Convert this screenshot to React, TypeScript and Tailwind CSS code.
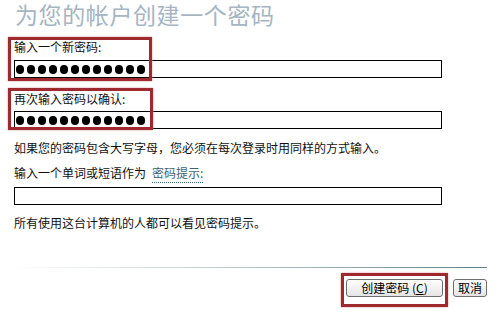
import React from "react";

const Dots = ({ count }: { count: number }) => {
  return (
    <div className="flex h-full items-center gap-[3px] pl-[1px]">
      {Array.from({ length: count }).map((_, i) => (
        <span key={i} className="block h-[9px] w-[8px] rounded-full bg-black" />
      ))}
    </div>
  );
};

const Field = ({ dots }: { dots?: number }) => {
  return (
    <div className="h-[18px] w-[428px] border border-black bg-white">
      {dots ? <Dots count={dots} /> : null}
    </div>
  );
};

const Highlight = ({ className }: { className: string }) => {
  return (
    <div
      className={`pointer-events-none absolute border-[3px] border-[#9e2a30] shadow-[0_0_2px_#d89a9a] ${className}`}
    />
  );
};

export default function App() {
  return (
    <div
      className="relative h-[328px] w-[499px] overflow-hidden bg-white text-[12px] text-[#111]"
      style={{ fontFamily: '"Noto Sans CJK SC", "DejaVu Sans", sans-serif' }}
    >
      <div className="flex flex-col px-[14px]">
        <div className="whitespace-nowrap pl-[1px] text-[23px] leading-[28px] tracking-[0.6px] text-[#a6b5c2]">
          为您的帐户创建一个密码
        </div>

        <div className="mt-[12px] leading-[14px]">输入一个新密码:</div>
        <div className="mt-[6px]">
          <Field dots={12} />
        </div>

        <div className="mt-[14px] leading-[14px]">再次输入密码以确认:</div>
        <div className="mt-[5px]">
          <Field dots={12} />
        </div>

        <div className="mt-[12px] leading-[14px]">
          如果您的密码包含大写字母，您必须在每次登录时用同样的方式输入。
        </div>

        <div className="mt-[11px] leading-[14px]">
          输入一个单词或短语作为
          <span className="ml-[6px] border-b border-dotted border-[#3d6272] pb-[1px] text-[#3d6272]">
            密码提示:
          </span>
        </div>
        <div className="mt-[7px]">
          <Field />
        </div>

        <div className="mt-[11px] leading-[14px]">
          所有使用这台计算机的人都可以看见密码提示。
        </div>

        <div className="mt-[37px] h-px w-[473px] bg-gradient-to-r from-transparent via-[#b5c4c6] to-[#5f8088]" />

        <div className="mt-[11px] flex justify-end gap-[10px]">
          <button className="flex h-[18px] w-[97px] items-center justify-center rounded-[3px] border border-[#6d6d6d] bg-gradient-to-b from-white to-[#e4e4e4] text-[12px] leading-none text-black">
            创建密码 (<span className="underline">C</span>)
          </button>
          <button className="mr-[-2px] flex h-[18px] w-[34px] items-center justify-center rounded-[3px] border border-[#6d6d6d] bg-gradient-to-b from-white to-[#e4e4e4] text-[12px] leading-none text-black">
            取消
          </button>
        </div>
      </div>

      <Highlight className="left-[8px] top-[37px] h-[44px] w-[144px]" />
      <Highlight className="left-[8px] top-[88px] h-[42px] w-[145px]" />
      <Highlight className="left-[341px] top-[273px] h-[34px] w-[107px]" />
    </div>
  );
}
